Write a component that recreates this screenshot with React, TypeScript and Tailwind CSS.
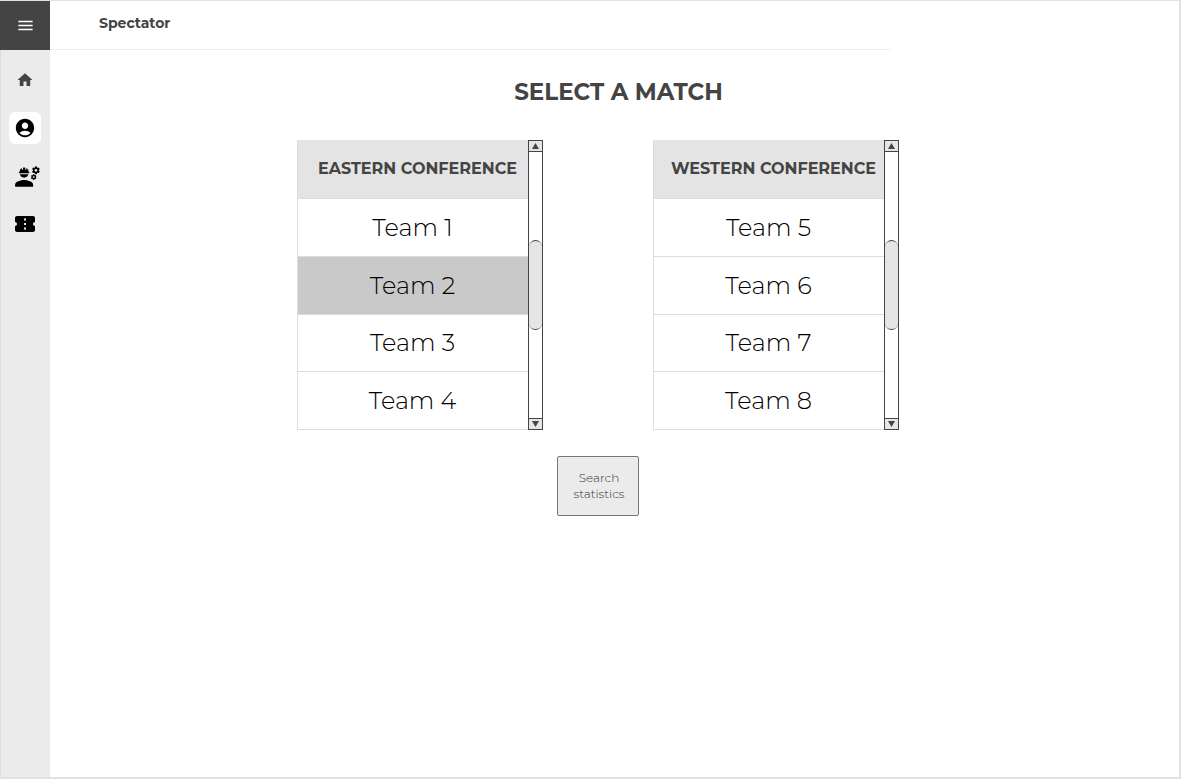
import { useState } from "react";
import {
  MdAccountCircle,
  MdConfirmationNumber,
  MdEngineering,
  MdHome,
  MdMenu,
} from "react-icons/md";

type ConferenceProps = {
  title: string;
  teams: string[];
  selected: string;
  onSelect: (team: string) => void;
};

function ScrollBar({ label }: { label: string }) {
  return (
    <div className="flex w-[15px] shrink-0 flex-col border border-[#444]">
      <button
        type="button"
        aria-label={`Scroll ${label} up`}
        className="flex h-[11px] items-center justify-center border-b border-[#444] bg-[#e5e5e5]"
      >
        <svg viewBox="0 0 7 6" className="h-[6px] w-[7px]" fill="#444">
          <path d="M3.5 0L7 6H0z" />
        </svg>
      </button>
      <div className="flex flex-1 flex-col bg-white pt-[88px]">
        <div className="h-[90px] rounded-full border-y border-[#444] bg-[#e5e5e5]" />
      </div>
      <button
        type="button"
        aria-label={`Scroll ${label} down`}
        className="flex h-[11px] items-center justify-center border-t border-[#444] bg-[#e5e5e5]"
      >
        <svg viewBox="0 0 7 6" className="h-[6px] w-[7px]" fill="#444">
          <path d="M0 0H7L3.5 6z" />
        </svg>
      </button>
    </div>
  );
}

function Conference({ title, teams, selected, onSelect }: ConferenceProps) {
  return (
    <section className="flex w-[246px]">
      <div className="min-w-0 flex-1 border-l border-[#ddd]">
        <h2 className="flex h-[58px] items-center justify-center whitespace-nowrap bg-[#e4e4e4] pl-[10px] text-base font-bold text-[#444]">
          {title}
        </h2>
        <ul className="grid h-[232px] grid-rows-4 border-b border-[#ddd]">
          {teams.map((team) => (
            <li key={team} className="border-t border-[#ddd]">
              <button
                type="button"
                aria-pressed={team === selected}
                onClick={() => onSelect(team)}
                className={`h-full w-full pt-px text-2xl font-light text-black ${
                  team === selected ? "bg-[#c9c9c9]" : "bg-white"
                }`}
              >
                {team}
              </button>
            </li>
          ))}
        </ul>
      </div>
      <ScrollBar label={title} />
    </section>
  );
}

export default function App() {
  const [selected, setSelected] = useState("Team 2");

  return (
    <div className="flex min-h-screen border-b-2 border-r-2 border-t border-[#e2e2e2] bg-white font-['Montserrat','Inter',sans-serif]">
      <aside className="flex w-[50px] shrink-0 flex-col bg-[#ebebeb]">
        <button
          type="button"
          aria-label="Menu"
          className="flex h-[49px] items-center justify-center bg-[#444] text-white"
        >
          <MdMenu size={19} />
        </button>
        <nav className="flex flex-1 flex-col items-center gap-4 border-l border-[#ddd] pr-px pt-[14px]">
          <a href="#home" aria-label="Home" className="flex size-8 items-center justify-center text-[#444]">
            <MdHome size={18} />
          </a>
          <a
            href="#spectator"
            aria-label="Spectator"
            className="flex size-8 items-center justify-center rounded-md bg-white text-black"
          >
            <MdAccountCircle size={22} />
          </a>
          <a href="#staff" aria-label="Staff" className="flex size-8 items-center justify-end text-black">
            <MdEngineering size={27} />
          </a>
          <a href="#tickets" aria-label="Tickets" className="flex size-8 items-center justify-center text-black">
            <MdConfirmationNumber size={24} />
          </a>
        </nav>
      </aside>
      <div className="flex min-w-0 flex-1 flex-col">
        <header className="flex h-[49px] w-full max-w-[840px] items-center border-b border-[#eee] pb-1 pl-[49px] text-sm font-bold text-[#444]">
          Spectator
        </header>
        <main className="flex flex-col items-center pr-[34px] pt-[26px]">
          <h1 className="pl-[42px] text-[23px] font-bold leading-8 text-[#444]">SELECT A MATCH</h1>
          <div className="mt-8 flex gap-[110px]">
            <Conference
              title="EASTERN CONFERENCE"
              teams={["Team 1", "Team 2", "Team 3", "Team 4"]}
              selected={selected}
              onSelect={setSelected}
            />
            <Conference
              title="WESTERN CONFERENCE"
              teams={["Team 5", "Team 6", "Team 7", "Team 8"]}
              selected={selected}
              onSelect={setSelected}
            />
          </div>
          <button
            type="button"
            className="mt-[26px] h-[60px] w-[82px] rounded-xs border border-[#777] bg-[#ebebeb] pl-[14px] pr-[11px] text-xs font-light leading-4 text-[#333]"
          >
            Search statistics
          </button>
        </main>
      </div>
    </div>
  );
}
